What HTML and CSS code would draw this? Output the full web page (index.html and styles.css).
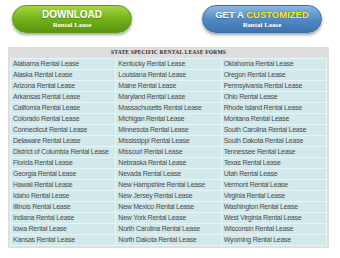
FILE: index.html
```html
<!DOCTYPE html>
<html lang="en">
<head>
    <meta charset="UTF-8">
    <title>State Specific Rental Lease Forms</title>
    <link rel="stylesheet" href="styles.css">
</head>
<body>
    <div class="buttons">
        <a href="#" class="btn btn-green">
            <span class="btn-main">DOWNLOAD</span>
            <span class="btn-sub">Rental Lease</span>
        </a>
        <a href="#" class="btn btn-blue">
            <span class="btn-main">GET A <em>CUSTOMIZED</em></span>
            <span class="btn-sub">Rental Lease</span>
        </a>
    </div>

    <div class="forms-box">
        <table class="forms">
            <tr><th colspan="3">State Specific Rental Lease Forms</th></tr>
            <tr><td>Alabama Rental Lease</td><td>Kentucky Rental Lease</td><td>Oklahoma Rental Lease</td></tr>
            <tr><td>Alaska Rental Lease</td><td>Louisiana Rental Lease</td><td>Oregon Rental Lease</td></tr>
            <tr><td>Arizona Rental Lease</td><td>Maine Rental Lease</td><td>Pennsylvania Rental Lease</td></tr>
            <tr><td>Arkansas Rental Lease</td><td>Maryland Rental Lease</td><td>Ohio Rental Lease</td></tr>
            <tr><td>California Rental Lease</td><td>Massachusetts Rental Lease</td><td>Rhode Island Rental Lease</td></tr>
            <tr><td>Colorado Rental Lease</td><td>Michigan Rental Lease</td><td>Montana Rental Lease</td></tr>
            <tr><td>Connecticut Rental Lease</td><td>Minnesota Rental Lease</td><td>South Carolina Rental Lease</td></tr>
            <tr><td>Delaware Rental Lease</td><td>Mississippi Rental Lease</td><td>South Dakota Rental Lease</td></tr>
            <tr><td>District of Columbia Rental Lease</td><td>Missouri Rental Lease</td><td>Tennessee Rental Lease</td></tr>
            <tr><td>Florida Rental Lease</td><td>Nebraska Rental Lease</td><td>Texas Rental Lease</td></tr>
            <tr><td>Georgia Rental Lease</td><td>Nevada Rental Lease</td><td>Utah Rental Lease</td></tr>
            <tr><td>Hawaii Rental Lease</td><td>New Hampshire Rental Lease</td><td>Vermont Rental Lease</td></tr>
            <tr><td>Idaho Rental Lease</td><td>New Jersey Rental Lease</td><td>Virginia Rental Lease</td></tr>
            <tr><td>Illinois Rental Lease</td><td>New Mexico Rental Lease</td><td>Washington Rental Lease</td></tr>
            <tr><td>Indiana Rental Lease</td><td>New York Rental Lease</td><td>West Virginia Rental Lease</td></tr>
            <tr><td>Iowa Rental Lease</td><td>North Carolina Rental Lease</td><td>Wisconsin Rental Lease</td></tr>
            <tr><td>Kansas Rental Lease</td><td>North Dakota Rental Lease</td><td>Wyoming Rental Lease</td></tr>
        </table>
    </div>
</body>
</html>
```

FILE: styles.css
```css
* {
    margin: 0;
    padding: 0;
    box-sizing: border-box;
}

body {
    font-family: 'Liberation Sans', Arial, sans-serif;
    background: #ffffff;
    width: 340px;
    height: 258px;
    overflow: hidden;
}

.buttons {
    display: flex;
    justify-content: space-between;
    padding: 5px 18px 0 12px;
    height: 47px;
}

.btn {
    display: flex;
    flex-direction: column;
    align-items: center;
    justify-content: center;
    width: 120px;
    height: 28px;
    border-radius: 14px;
    color: #ffffff;
    text-decoration: none;
    box-shadow: 0 2px 3px rgba(0, 0, 0, 0.35);
}

.btn-green {
    background: linear-gradient(#a6d63e, #6fae19 55%, #5a9610);
    border: 1px solid #5e9a17;
}

.btn-blue {
    background: linear-gradient(#8ab8e2, #4f89c3 55%, #3e73ab);
    border: 1px solid #3c6fa3;
}

.btn-main {
    font-weight: bold;
    font-size: 10px;
    line-height: 12px;
    text-shadow: 0 1px 1px rgba(0, 0, 0, 0.3);
}

.btn-blue .btn-main {
    font-size: 9.5px;
}

.btn-main em {
    font-style: normal;
    color: #f7f23a;
    text-shadow: 0 0 1px #333333;
}

.btn-sub {
    font-family: 'Liberation Serif', serif;
    font-weight: bold;
    font-size: 7px;
    line-height: 9px;
}

.forms-box {
    margin-left: 8px;
    width: 321px;
    background: #dedede;
    padding: 0 2px 2px 2px;
}

.forms {
    width: 100%;
    border-collapse: collapse;
    table-layout: fixed;
}

.forms th {
    height: 11px;
    font-family: 'Liberation Serif', serif;
    font-size: 5.5px;
    font-weight: bold;
    letter-spacing: 0.2px;
    text-transform: uppercase;
    color: #2e2e2e;
    text-align: center;
}

.forms td {
    height: 11px;
    background: #d2e9eb;
    border: 1px solid #e9f4f5;
    color: #4a4a4a;
    font-size: 7px;
    letter-spacing: -0.25px;
    line-height: 9px;
    padding: 0 2px;
    white-space: nowrap;
    overflow: hidden;
}

.forms td:first-child {
    width: 114px;
}

.forms td:nth-child(2) {
    width: 102px;
}
```
